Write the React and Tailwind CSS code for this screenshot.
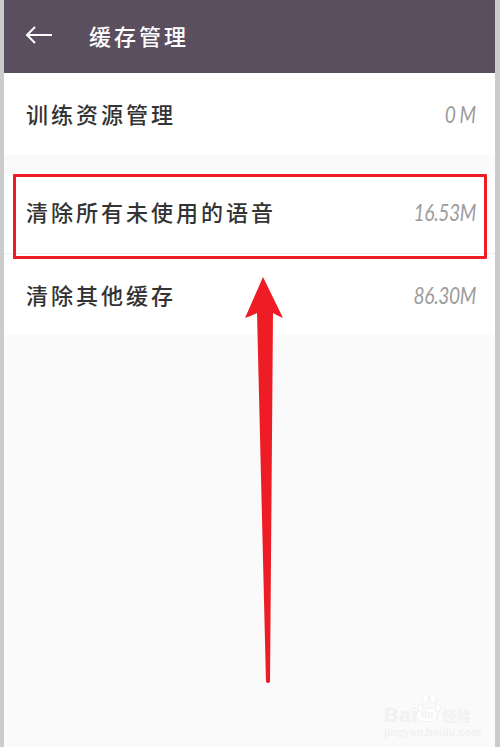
const rows = [
  { label: "训练资源管理", size: "0 M", height: "h-[82px] pb-[1px]" },
  { label: "清除所有未使用的语音", size: "16.53M", height: "mt-[18px] h-[81px] border-b border-[#efefef] pb-[3px]" },
  { label: "清除其他缓存", size: "86.30M", height: "h-[81px]" },
];

const cjk = "font-['Noto_Sans_CJK_SC',sans-serif]";

function Row({ label, size, height }) {
  return (
    <div className={`flex items-center justify-between bg-white pl-[22px] pr-[19px] ${height}`}>
      <span className={`${cjk} text-[22px] font-medium tracking-[3px] text-[#333333]`}>{label}</span>
      <span className="origin-right scale-x-[0.8] font-['Lato',sans-serif] text-[24px] tracking-[-0.5px] text-[#9c9c9c] italic">{size}</span>
    </div>
  );
}

function RedArrow() {
  return (
    <svg className="absolute left-[240px] top-[272px]" width="50" height="416" viewBox="0 0 50 416">
      <path
        d="M23 5 L43 46 Q38 44 33 41 L30 410 Q28 412 26 410 L17 41 Q11 44 5 46 Z"
        fill="#ee1c25"
      />
    </svg>
  );
}

function Watermark() {
  return (
    <div className="absolute left-[384px] top-[706px] flex w-[92px] flex-col text-[#f1f1f1]">
      <svg className="absolute left-[33px] top-[-13px]" width="24" height="22" viewBox="0 0 24 22" fill="#ffffff" stroke="#f1f1f1" strokeWidth="1">
        <ellipse cx="3.5" cy="15" rx="2.5" ry="4" />
        <ellipse cx="8.5" cy="6" rx="3" ry="5" />
        <ellipse cx="16" cy="6" rx="3" ry="5" />
        <ellipse cx="21" cy="15" rx="2.5" ry="4" />
      </svg>
      <div className="flex items-center">
        <span className="w-[29px] font-['Liberation_Sans',sans-serif] text-[20px] leading-[18px] font-bold tracking-[1px]">Bai</span>
        <span className="ml-[3px] rounded-full border border-[#f1f1f1] bg-white px-[4px] font-['Liberation_Sans',sans-serif] text-[10px] leading-[12px] font-bold">du</span>
        <span className={`${cjk} ml-[4px] text-[14px] leading-[18px] font-bold`}>经验</span>
      </div>
      <span className="mt-[2px] font-['Liberation_Sans',sans-serif] text-[10.5px] leading-[12px] font-bold tracking-[0.3px]">jingyan.baidu.com</span>
    </div>
  );
}

export default function App() {
  return (
    <div className="relative h-[747px] w-[500px] overflow-hidden bg-[#cccccc] pl-[4px] pr-[5px]">
      <div className="h-full bg-[#fafafa]">
        <header className="flex h-[73px] items-center bg-[#5a4f5f] pb-[3px] pl-[21px] text-white">
          <svg width="27" height="18" viewBox="0 0 27 18" fill="none" stroke="currentColor" strokeWidth="2">
            <path d="M27 9 H2 M10 1 L2 9 L10 17" />
          </svg>
          <h1 className={`${cjk} ml-[37px] text-[22px] font-medium tracking-[3px]`}>缓存管理</h1>
        </header>
        {rows.map((row) => (
          <Row key={row.label} {...row} />
        ))}
      </div>

      {/* annotation drawn over the screenshot */}
      <div className="absolute left-[13px] top-[174px] h-[85px] w-[474px] rounded-[1px] border-[3px] border-[#ee1c25]" />
      <RedArrow />
      <Watermark />
    </div>
  );
}
